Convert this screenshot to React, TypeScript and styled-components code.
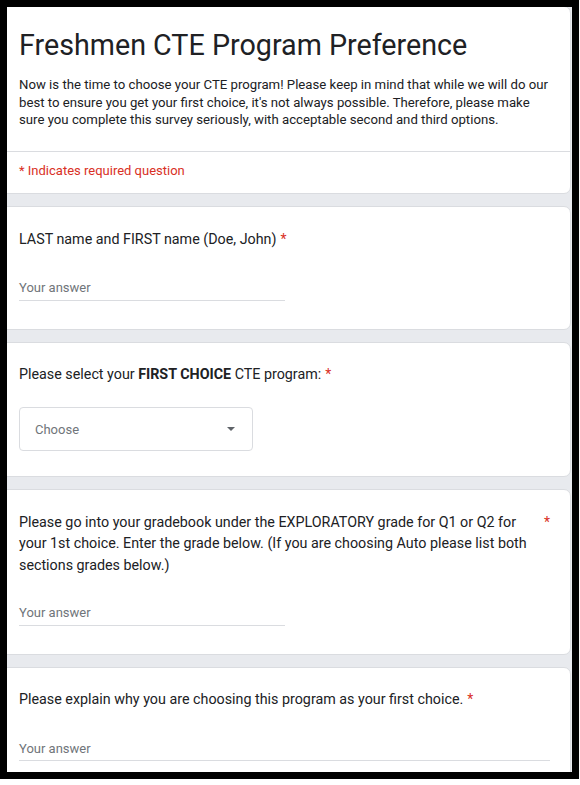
import React from 'react';
import styled, { createGlobalStyle } from 'styled-components';

const GlobalStyle = createGlobalStyle`
  html, body {
    margin: 0;
    padding: 0;
    background: #ffffff;
  }
  body {
    font-family: Roboto, 'Liberation Sans', Arial, sans-serif;
    color: #202124;
  }
`;

const Frame = styled.div`
  box-sizing: border-box;
  width: 579px;
  height: 779px;
  border: 7px solid #000000;
  background: #e8eaee;
  overflow: hidden;
`;

const Column = styled.div`
  display: flex;
  flex-direction: column;
  gap: 12px;
  margin: -1px 1px 0 -9px;
`;

const Card = styled.section`
  box-sizing: border-box;
  background: #ffffff;
  border: 1px solid #dadce0;
  border-radius: 7px;
`;

const HeaderTop = styled.div`
  padding: 20px 20px 22px;
  border-bottom: 1px solid #dadce0;
`;

const Title = styled.h1`
  margin: 0;
  font-size: 28.7px;
  line-height: 36px;
  font-weight: 400;
  color: #202124;
`;

const Description = styled.p`
  margin: 13px 0 0;
  font-size: 13.2px;
  line-height: 17.5px;
  color: #202124;
`;

const RequiredNote = styled.div`
  padding: 10px 20px 14px;
  font-size: 13px;
  line-height: 17.5px;
  color: #d93025;
`;

const QuestionCard = styled(Card)<{ $bottom: number }>`
  padding: 21.5px 20px ${(p) => p.$bottom}px;
`;

const QuestionRow = styled.div`
  display: flex;
  align-items: flex-start;
`;

const QuestionText = styled.div`
  font-size: 14.3px;
  line-height: 21.5px;
  color: #202124;

  b {
    font-weight: 700;
  }
`;

const Star = styled.span`
  flex: none;
  margin-left: 4px;
  font-size: 14px;
  line-height: 21.5px;
  color: #d93025;
`;

const Answer = styled.div<{ $wide?: boolean; $gap: number }>`
  box-sizing: border-box;
  width: ${(p) => (p.$wide ? '100%' : '266px')};
  margin-top: ${(p) => p.$gap}px;
  padding-bottom: 3.5px;
  border-bottom: 1px solid #dadce0;
  font-size: 13px;
  line-height: 16px;
  color: #70757a;
`;

const Select = styled.div`
  box-sizing: border-box;
  width: 234px;
  height: 44px;
  margin-top: 21.5px;
  padding: 0 17px 0 15px;
  display: flex;
  align-items: center;
  justify-content: space-between;
  border: 1px solid #dadce0;
  border-radius: 4px;
  font-size: 13px;
  color: #70757a;
`;

const Caret = styled.span`
  width: 0;
  height: 0;
  border-left: 4px solid transparent;
  border-right: 4px solid transparent;
  border-top: 4px solid #5f6368;
`;

function Question(props: { children: React.ReactNode }) {
  return (
    <QuestionRow>
      <QuestionText>{props.children}</QuestionText>
      <Star>*</Star>
    </QuestionRow>
  );
}

export default function App() {
  return (
    <>
      <GlobalStyle />
      <Frame>
        <Column>
          <Card>
            <HeaderTop>
              <Title>Freshmen CTE Program Preference</Title>
              <Description>
                Now is the time to choose your CTE program! Please keep in mind that while we will do
                our best to ensure you get your first choice, it's not always possible. Therefore,
                please make sure you complete this survey seriously, with acceptable second and third
                options.
              </Description>
            </HeaderTop>
            <RequiredNote>* Indicates required question</RequiredNote>
          </Card>

          <QuestionCard $bottom={28}>
            <Question>LAST name and FIRST name (Doe, John)</Question>
            <Answer $gap={30}>Your answer</Answer>
          </QuestionCard>

          <QuestionCard $bottom={25}>
            <Question>
              Please select your <b>FIRST CHOICE</b> CTE program:
            </Question>
            <Select>
              Choose
              <Caret />
            </Select>
          </QuestionCard>

          <QuestionCard $bottom={28}>
            <Question>
              Please go into your gradebook under the EXPLORATORY grade for Q1 or Q2 for your 1st
              choice. Enter the grade below. (If you are choosing Auto please list both sections
              grades below.)
            </Question>
            <Answer $gap={29}>Your answer</Answer>
          </QuestionCard>

          <QuestionCard $bottom={29}>
            <Question>Please explain why you are choosing this program as your first choice.</Question>
            <Answer $wide $gap={30}>Your answer</Answer>
          </QuestionCard>
        </Column>
      </Frame>
    </>
  );
}
